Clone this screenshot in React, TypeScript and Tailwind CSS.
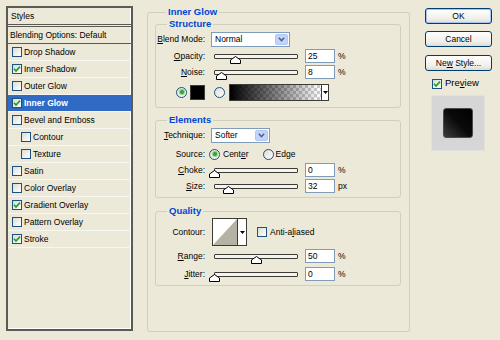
import React from "react";

function Check({ on = false }: { on?: boolean }) {
  return (
    <span className="flex h-[10px] w-[10px] shrink-0 items-center justify-center border border-[#1c5180] bg-[linear-gradient(135deg,#dcdcd4,#ffffff)]">
      {on && (
        <svg width="8" height="8" viewBox="0 0 8 8">
          <path d="M1 3.8 L3 6 L7 1.6" fill="none" stroke="#21a121" strokeWidth="1.7" />
        </svg>
      )}
    </span>
  );
}

function Radio({ on = false }: { on?: boolean }) {
  return (
    <span className="flex h-[11px] w-[11px] shrink-0 items-center justify-center rounded-full border border-[#1c5180] bg-[linear-gradient(135deg,#dcdcd4,#ffffff)]">
      {on && <span className="h-[4px] w-[4px] rounded-full bg-[#2aa82a] shadow-[0_0_0_1px_#8fd48f]" />}
    </span>
  );
}

function Slider({ pct }: { pct: number }) {
  return (
    <div className="relative ml-[9px] h-[5px] w-[84px] rounded-[1px] border border-[#3c3b35] bg-[#f4f3ee]">
      <svg
        className="absolute top-[1px]"
        style={{ left: `${(pct * 84) / 100 - 6}px` }}
        width="11"
        height="8"
        viewBox="0 0 11 8"
      >
        <path d="M0.5 7.5 V4 L5.5 0.5 L10.5 4 V7.5 Z" fill="#ffffff" stroke="#000000" />
      </svg>
    </div>
  );
}

function Num({ v }: { v: string }) {
  return (
    <div className="ml-[7px] h-[14px] w-[30px] border border-[#7f9db9] bg-white pl-[2px] leading-[12px]">
      {v}
    </div>
  );
}

function Select({ value, wide }: { value: string; wide?: boolean }) {
  return (
    <div
      className={`ml-[6px] flex h-[15px] items-center border border-[#7f9db9] bg-white ${
        wide ? "w-[79px]" : "w-[59px]"
      }`}
    >
      <span className="flex-1 pl-[3px]">{value}</span>
      <span className="m-[1px] flex h-[11px] w-[13px] items-center justify-center rounded-[2px] border border-[#b1c6f3] bg-[#c3d4fb]">
        <svg width="7" height="5" viewBox="0 0 7 5">
          <path d="M0.8 0.8 L3.5 3.6 L6.2 0.8" fill="none" stroke="#4d6185" strokeWidth="1.5" />
        </svg>
      </span>
    </div>
  );
}

function Label({ children }: { children: React.ReactNode }) {
  return <span className="w-[49px] shrink-0 text-right">{children}</span>;
}

function SliderRow({
  label,
  pct,
  value,
  unit,
  className,
}: {
  label: React.ReactNode;
  pct: number;
  value: string;
  unit: string;
  className: string;
}) {
  return (
    <div className={`flex h-[14px] items-center ${className}`}>
      <Label>{label}</Label>
      <Slider pct={pct} />
      <Num v={value} />
      <span className="ml-[3px]">{unit}</span>
    </div>
  );
}

function Legend({ children, className }: { children: React.ReactNode; className: string }) {
  return (
    <legend className={`px-[2px] text-[9.5px] font-bold leading-[12px] text-[#0046d5] ${className}`}>
      {children}
    </legend>
  );
}

const styles: { name: string; on?: boolean; sub?: boolean; sel?: boolean }[] = [
  { name: "Drop Shadow" },
  { name: "Inner Shadow", on: true },
  { name: "Outer Glow" },
  { name: "Inner Glow", on: true, sel: true },
  { name: "Bevel and Emboss" },
  { name: "Contour", sub: true },
  { name: "Texture", sub: true },
  { name: "Satin" },
  { name: "Color Overlay" },
  { name: "Gradient Overlay", on: true },
  { name: "Pattern Overlay" },
  { name: "Stroke", on: true },
];

function Button({ children, primary, className }: { children: React.ReactNode; primary?: boolean; className: string }) {
  return (
    <div
      className={`flex h-[16px] w-[67px] items-center justify-center rounded-[3px] border border-[#003c74] bg-[linear-gradient(#ffffff,#f0efea_70%,#dedbd0)] ${
        primary ? "shadow-[inset_0_0_0_1px_#a8c4f0]" : ""
      } ${className}`}
    >
      <span>{children}</span>
    </div>
  );
}

export default function App() {
  return (
    <div className="flex h-[340px] w-[500px] bg-[#ece9d8] pl-[6px] pt-[6px] font-['Liberation_Sans',Arial,sans-serif] text-[8.5px] text-black">
      {/* styles list */}
      <div className="flex h-[325px] w-[127px] flex-col border-2 border-[#5c5b53] shadow-[inset_-1px_-1px_0_#ffffff]">
        <div className="flex h-[17px] items-center border-b border-[#5c5b53] pl-[3px]">Styles</div>
        <div className="mt-[1px] flex h-[18px] items-center border-y border-[#5c5b53] pl-[2px]">
          Blending Options: Default
        </div>
        {styles.map((s) => (
          <div
            key={s.name}
            className={`flex h-[17px] items-center gap-[2px] border-b border-[#f7f6f0] ${
              s.sub ? "pl-[13px]" : "pl-[4px]"
            } ${s.sel ? "bg-[#316ac5] font-bold text-white" : ""}`}
          >
            <Check on={s.on} />
            <span>{s.name}</span>
          </div>
        ))}
      </div>

      {/* main group */}
      <fieldset className="ml-[14px] h-[326px] w-[263px] rounded-[3px] border border-[#d0cebf] pl-[7px] pr-[8px]">
        <Legend className="ml-[11px]">Inner Glow</Legend>

        <fieldset className="rounded-[3px] border border-[#d0cebf] pb-[7px]">
          <Legend className="ml-[11px]">Structure</Legend>
          <div className="mt-[2px] flex h-[15px] items-center">
            <Label>
              <u>B</u>lend Mode:
            </Label>
            <Select value="Normal" wide />
          </div>
          <SliderRow
            className="mt-[2px]"
            label={
              <>
                <u>O</u>pacity:
              </>
            }
            pct={25}
            value="25"
            unit="%"
          />
          <SliderRow
            className="mt-[2px]"
            label={
              <>
                <u>N</u>oise:
              </>
            }
            pct={8}
            value="8"
            unit="%"
          />
          <div className="mt-[5px] flex h-[16px] items-center pl-[20px]">
            <Radio on />
            <span className="ml-[3px] h-[15px] w-[15px] border border-[#3c3b35] bg-black" />
            <span className="ml-[9px]">
              <Radio />
            </span>
            <div className="ml-[4px] flex h-[17px] w-[100px] border border-[#3c3b35]">
              <div className="flex-1 bg-[image:linear-gradient(to_right,#000000,rgba(0,0,0,0)),repeating-conic-gradient(#cfcfcf_0_25%,#ffffff_0_50%)] bg-[length:100%_100%,6px_6px]" />
              <div className="flex w-[7px] items-center justify-center border-l border-[#3c3b35] bg-white">
                <svg width="5" height="3" viewBox="0 0 5 3">
                  <path d="M0 0 H5 L2.5 3 Z" fill="#000" />
                </svg>
              </div>
            </div>
          </div>
        </fieldset>

        <fieldset className="mt-[6px] rounded-[3px] border border-[#d0cebf] pb-[4px]">
          <Legend className="ml-[11px]">Elements</Legend>
          <div className="mt-[2px] flex h-[15px] items-center">
            <Label>
              <u>T</u>echnique:
            </Label>
            <Select value="Softer" />
          </div>
          <div className="mt-[5px] flex h-[12px] items-center">
            <Label>Source:</Label>
            <span className="ml-[4px]">
              <Radio on />
            </span>
            <span className="ml-[3px]">
              Cent<u>e</u>r
            </span>
            <span className="ml-[14px]">
              <Radio />
            </span>
            <span className="ml-[2px]">Edge</span>
          </div>
          <SliderRow
            className="mt-[3px]"
            label={
              <>
                <u>C</u>hoke:
              </>
            }
            pct={0}
            value="0"
            unit="%"
          />
          <SliderRow
            className="mt-[2px]"
            label={
              <>
                <u>S</u>ize:
              </>
            }
            pct={17}
            value="32"
            unit="px"
          />
        </fieldset>

        <fieldset className="mt-[7px] rounded-[3px] border border-[#d0cebf] pb-[4px]">
          <Legend className="ml-[11px]">Quality</Legend>
          <div className="mt-[1px] flex h-[28px] items-center">
            <Label>Contour:</Label>
            <div className="ml-[7px] flex h-[28px] w-[35px] border border-[#3c3b35] bg-white">
              <svg className="flex-1" viewBox="0 0 24 26" preserveAspectRatio="none">
                <path d="M0 26 L24 0 V26 Z" fill="#b5b1a3" />
              </svg>
              <div className="flex w-[9px] items-center justify-center border-l border-[#3c3b35] bg-white">
                <svg width="5" height="3" viewBox="0 0 5 3">
                  <path d="M0 0 H5 L2.5 3 Z" fill="#000" />
                </svg>
              </div>
            </div>
            <span className="ml-[10px]">
              <Check />
            </span>
            <span className="ml-[3px]">
              Anti-a<u>l</u>iased
            </span>
          </div>
          <SliderRow
            className="mt-[3px]"
            label={
              <>
                <u>R</u>ange:
              </>
            }
            pct={50}
            value="50"
            unit="%"
          />
          <SliderRow
            className="mt-[4px]"
            label={
              <>
                <u>J</u>itter:
              </>
            }
            pct={0}
            value="0"
            unit="%"
          />
        </fieldset>
      </fieldset>

      {/* buttons */}
      <div className="ml-[15px] flex w-[67px] flex-col pt-[2px]">
        <Button primary className="">
          OK
        </Button>
        <Button className="mt-[7px]">Cancel</Button>
        <Button className="mt-[8px]">
          Ne<u>w</u>&nbsp;Style...
        </Button>
        <div className="mt-[7px] flex h-[11px] items-center pl-[7px]">
          <Check on />
          <span className="ml-[3px] text-[9.5px]">
            Pre<u>v</u>iew
          </span>
        </div>
        <div className="ml-[6px] mt-[6px] flex h-[56px] w-[54px] items-center justify-center border border-[#e2e1da] bg-[#d6d6d6]">
          <div className="h-[30px] w-[30px] rounded-[3px] border border-[#4a4a4a] bg-[linear-gradient(45deg,#3c3c3c,#0a0a0a_50%,#000000)]" />
        </div>
      </div>
    </div>
  );
}
